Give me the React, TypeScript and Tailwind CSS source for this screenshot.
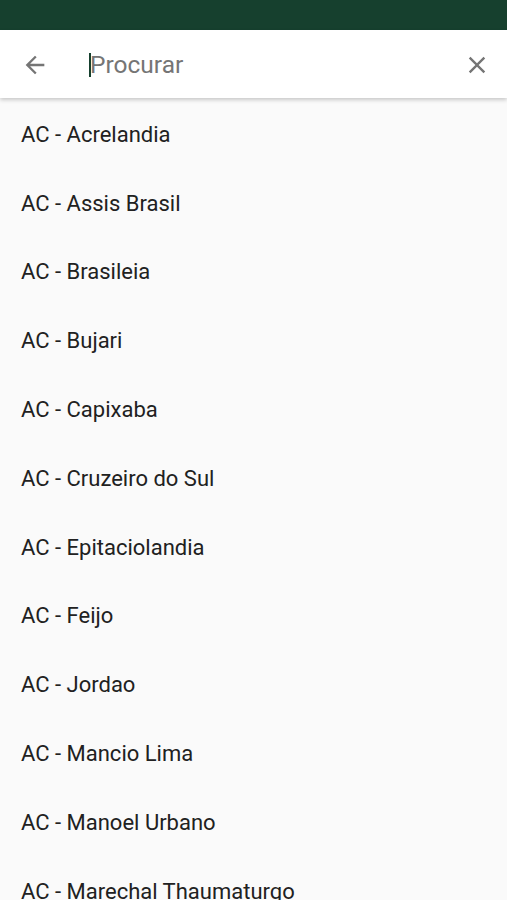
import React from 'react';

const cities = [
  'AC - Acrelandia',
  'AC - Assis Brasil',
  'AC - Brasileia',
  'AC - Bujari',
  'AC - Capixaba',
  'AC - Cruzeiro do Sul',
  'AC - Epitaciolandia',
  'AC - Feijo',
  'AC - Jordao',
  'AC - Mancio Lima',
  'AC - Manoel Urbano',
  'AC - Marechal Thaumaturgo',
];

const App: React.FC = () => {
  return (
    <div className="h-[900px] overflow-hidden bg-[#fafafa] font-['Roboto','Liberation_Sans',sans-serif]">
      <div className="h-[30px] bg-[#16402e]" />
      <header className="relative z-10 flex h-[68px] items-center bg-white pt-[2px] shadow-[0_2px_4px_rgba(0,0,0,0.2)]">
        <button className="flex h-[66px] w-[70px] items-center justify-center text-[#757575]">
          <svg width="28" height="28" viewBox="0 0 24 24" fill="currentColor">
            <path d="M20 11H7.83l5.59-5.59L12 4l-8 8 8 8 1.41-1.41L7.83 13H20v-2z" />
          </svg>
        </button>
        <div className="ml-[19px] flex flex-1 items-center">
          <span className="h-[24px] w-[2px] bg-[#16402e]" />
          <span className="ml-[-1px] text-[24.5px] text-[#757575]">Procurar</span>
        </div>
        <button className="flex h-[66px] w-[60px] items-center justify-center text-[#757575]">
          <svg width="28" height="28" viewBox="0 0 24 24" fill="currentColor">
            <path d="M19 6.41L17.59 5 12 10.59 6.41 5 5 6.41 10.59 12 5 17.59 6.41 19 12 13.41 17.59 19 19 17.59 13.41 12z" />
          </svg>
        </button>
      </header>
      <ul className="pt-[2px]">
        {cities.map((c) => (
          <li key={c} className="flex h-[68.8px] items-center px-[21px] text-[22px] text-[#212121]">
            {c}
          </li>
        ))}
      </ul>
    </div>
  );
};

export default App;
